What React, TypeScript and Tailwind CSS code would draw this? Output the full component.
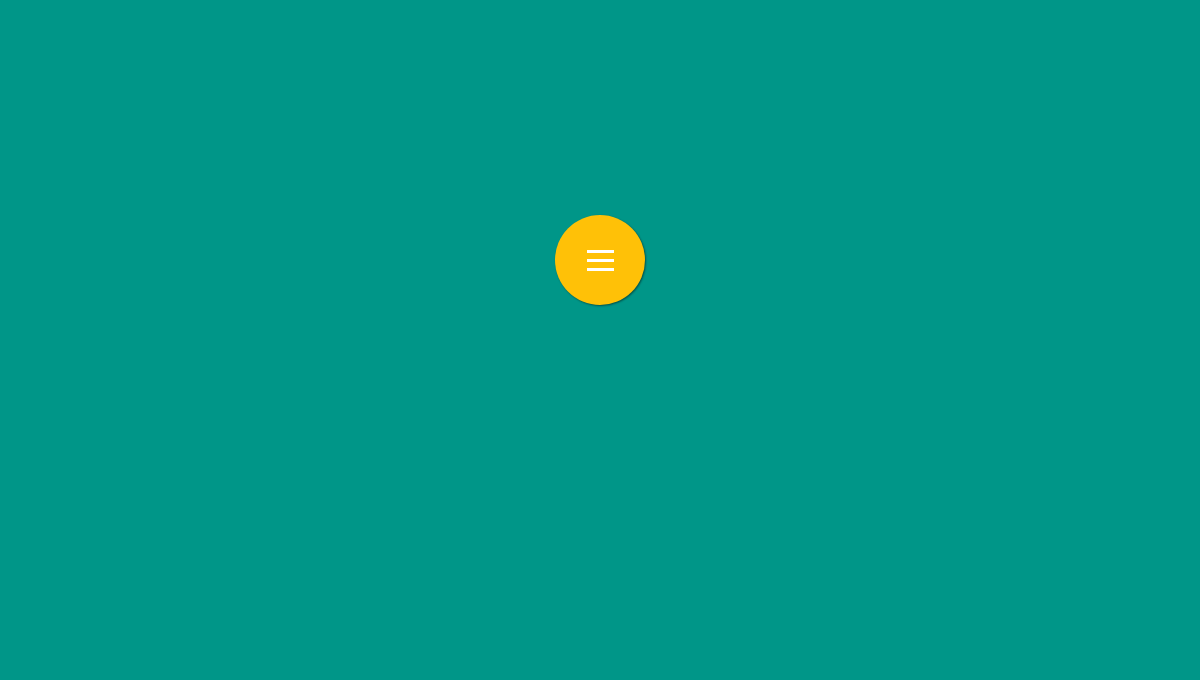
import React from "react";

export default function App() {
  return (
    <div className="min-h-screen w-full bg-[#009688] flex justify-center pt-[215px]">
      <button
        type="button"
        aria-label="Menu"
        className="w-[90px] h-[90px] rounded-full bg-[#FFC107] flex flex-col items-center justify-center gap-[6px] shadow-[1px_1px_2px_rgba(0,0,0,0.45)]"
      >
        <span className="block w-[27px] h-[3px] bg-white" />
        <span className="block w-[27px] h-[3px] bg-white" />
        <span className="block w-[27px] h-[3px] bg-white" />
      </button>
    </div>
  );
}
